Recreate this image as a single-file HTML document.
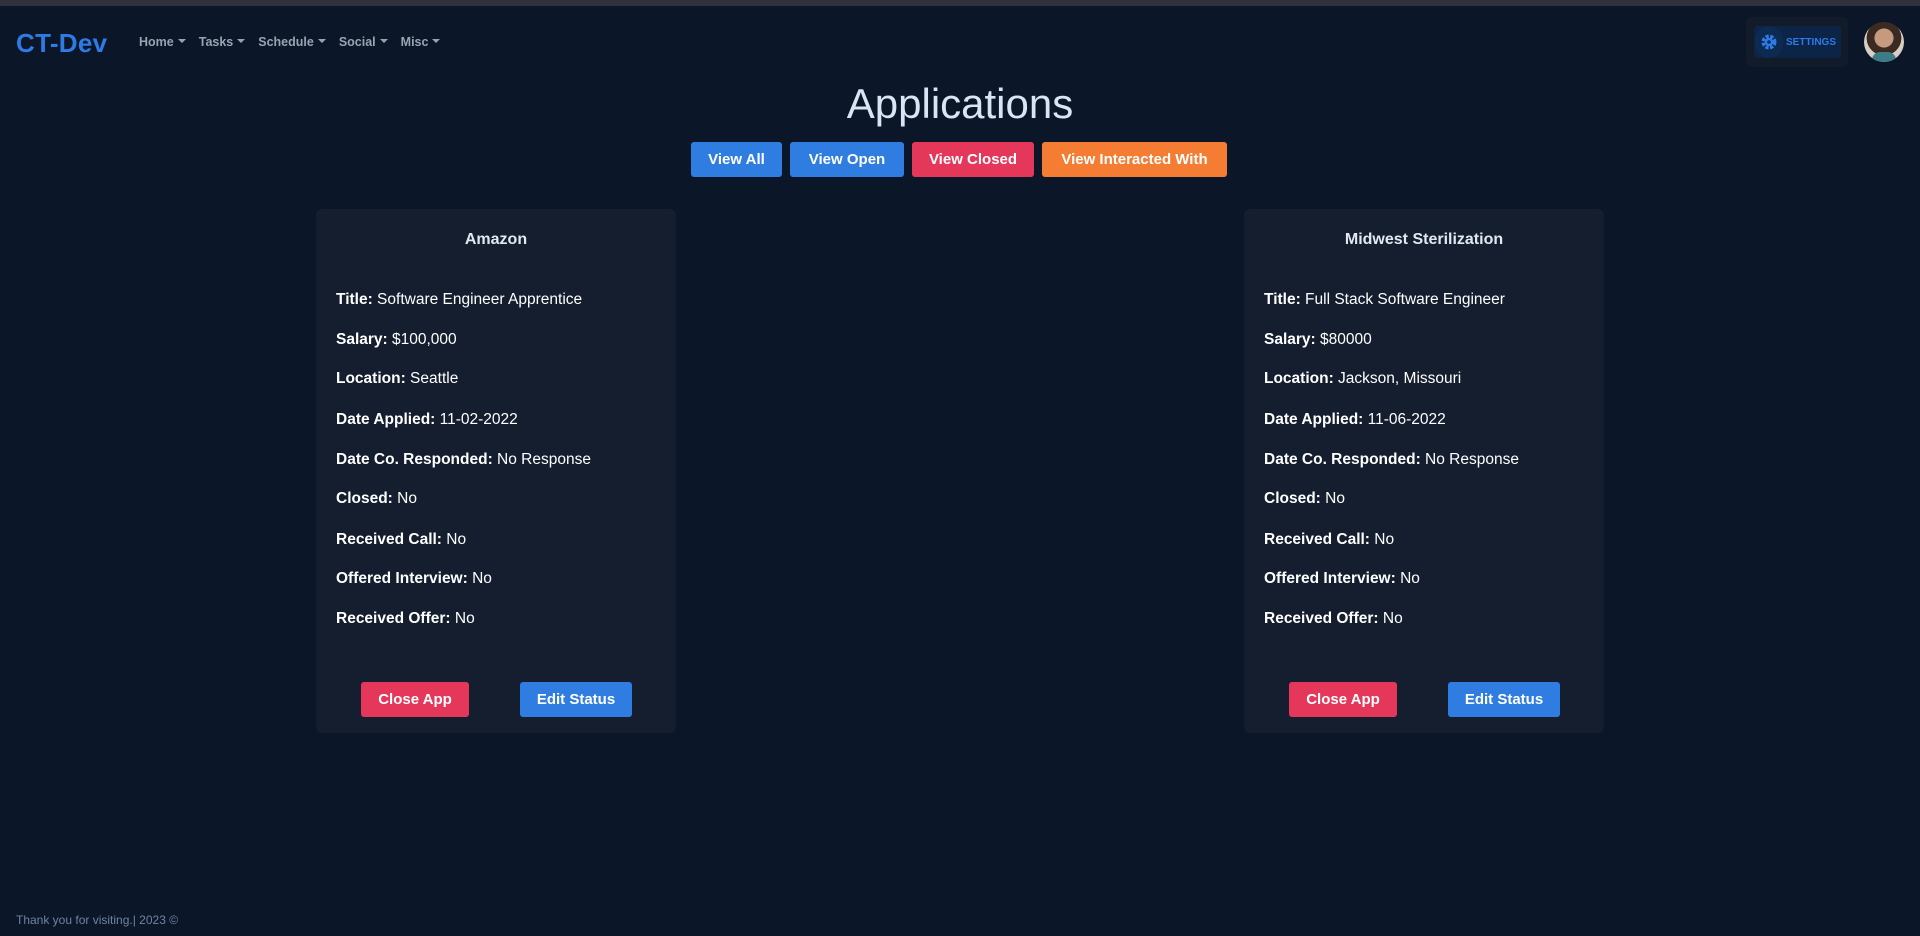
<!DOCTYPE html>
<html><head><meta charset="utf-8"><style>
*{box-sizing:border-box;margin:0;padding:0}
body{width:1920px;height:936px;background:#0b1628;font-family:"Liberation Sans",sans-serif;color:#fff;position:relative;overflow:hidden}
.topbar{position:absolute;left:0;top:0;width:1920px;height:6px;background:#2f323c}
.brand{position:absolute;left:16px;top:28px;font-size:26px;font-weight:bold;color:#2d7be5;letter-spacing:0.3px}
.nav{position:absolute;left:139px;top:35px;display:flex;gap:13px;font-size:12.5px;font-weight:bold;color:#9aa3b0}
.nav span:after{content:"";display:inline-block;margin-left:4px;vertical-align:3px;border-left:4px solid transparent;border-right:4px solid transparent;border-top:4px solid #9aa3b0}
.setwrap{position:absolute;left:1746px;top:17px;width:102px;height:50px;background:#111b2a;border-radius:6px}
.set{position:absolute;left:8px;top:9px;width:87px;height:32px;background:#0c2447;border-radius:4px;color:#2d7be5;font-size:10px;font-weight:bold;line-height:34px;padding-left:32px}
.set .ic{position:absolute;left:1px;top:0;width:28px;height:32px;background:#0d2a50;border-radius:14px}
.avatar{position:absolute;left:1864px;top:22px;width:40px;height:40px;border-radius:50%;background:radial-gradient(circle at 50% 40%,#c59a7e 0 30%,#3a2a22 31% 55%,#d8cfc3 56%);overflow:hidden}
.avatar:after{content:"";position:absolute;left:8px;top:30px;width:24px;height:14px;background:#3b7c86;border-radius:8px 8px 0 0}
h1{position:absolute;left:0;width:1920px;top:80px;text-align:center;font-size:42px;font-weight:normal;color:#d9e5f2}
.btns{position:absolute;top:142px;left:691px;display:flex;gap:8px}
.btn{height:35px;line-height:36px;border-radius:3px;font-size:15px;font-weight:bold;color:#fff;text-align:center}
.b{background:#2f7de1}.r{background:#e5375a}.o{background:#f47c33}
.card{position:absolute;top:209px;width:360px;height:524px;background:#141e2e;border-radius:6px}
.card h3{position:absolute;top:22px;width:100%;text-align:center;font-size:16px;font-weight:bold;color:#e2e8f0}
.card p{position:absolute;left:20px;font-size:15.5px;color:#fff}
.card b{font-weight:bold}
.card .btn{position:absolute;top:473px}
.foot{position:absolute;left:16px;top:913px;font-size:12px;color:#6f84a0}
</style></head><body>
<div class="topbar"></div>
<div class="brand">CT-Dev</div>
<div class="nav"><span>Home</span><span>Tasks</span><span>Schedule</span><span>Social</span><span>Misc</span></div>
<div class="setwrap"><div class="set"><div class="ic"><svg width="28" height="32" viewBox="0 0 28 32"><circle cx="14" cy="16" r="5.5" fill="none" stroke="#2d7be5" stroke-width="4" stroke-dasharray="3 1.5"/><circle cx="14" cy="16" r="4" fill="#2d7be5"/><circle cx="14" cy="16" r="1.8" fill="#0d2a50"/></svg></div>SETTINGS</div></div>
<div class="avatar"></div>
<h1>Applications</h1>
<div class="btns">
<div class="btn b" style="width:91px">View All</div>
<div class="btn b" style="width:114px">View Open</div>
<div class="btn r" style="width:122px">View Closed</div>
<div class="btn o" style="width:185px">View Interacted With</div>
</div>
<div class="card" style="left:316px">
<h3>Amazon</h3>
<p style="top:82px"><b>Title:</b> Software Engineer Apprentice</p>
<p style="top:122px"><b>Salary:</b> $100,000</p>
<p style="top:161px"><b>Location:</b> Seattle</p>
<p style="top:202px"><b>Date Applied:</b> 11-02-2022</p>
<p style="top:242px"><b>Date Co. Responded:</b> No Response</p>
<p style="top:281px"><b>Closed:</b> No</p>
<p style="top:322px"><b>Received Call:</b> No</p>
<p style="top:361px"><b>Offered Interview:</b> No</p>
<p style="top:401px"><b>Received Offer:</b> No</p>
<div class="btn r" style="left:45px;width:108px">Close App</div>
<div class="btn b" style="left:204px;width:112px">Edit Status</div>
</div>
<div class="card" style="left:1244px">
<h3>Midwest Sterilization</h3>
<p style="top:82px"><b>Title:</b> Full Stack Software Engineer</p>
<p style="top:122px"><b>Salary:</b> $80000</p>
<p style="top:161px"><b>Location:</b> Jackson, Missouri</p>
<p style="top:202px"><b>Date Applied:</b> 11-06-2022</p>
<p style="top:242px"><b>Date Co. Responded:</b> No Response</p>
<p style="top:281px"><b>Closed:</b> No</p>
<p style="top:322px"><b>Received Call:</b> No</p>
<p style="top:361px"><b>Offered Interview:</b> No</p>
<p style="top:401px"><b>Received Offer:</b> No</p>
<div class="btn r" style="left:45px;width:108px">Close App</div>
<div class="btn b" style="left:204px;width:112px">Edit Status</div>
</div>
<div class="foot">Thank you for visiting.| 2023 ©</div>
</body></html>
